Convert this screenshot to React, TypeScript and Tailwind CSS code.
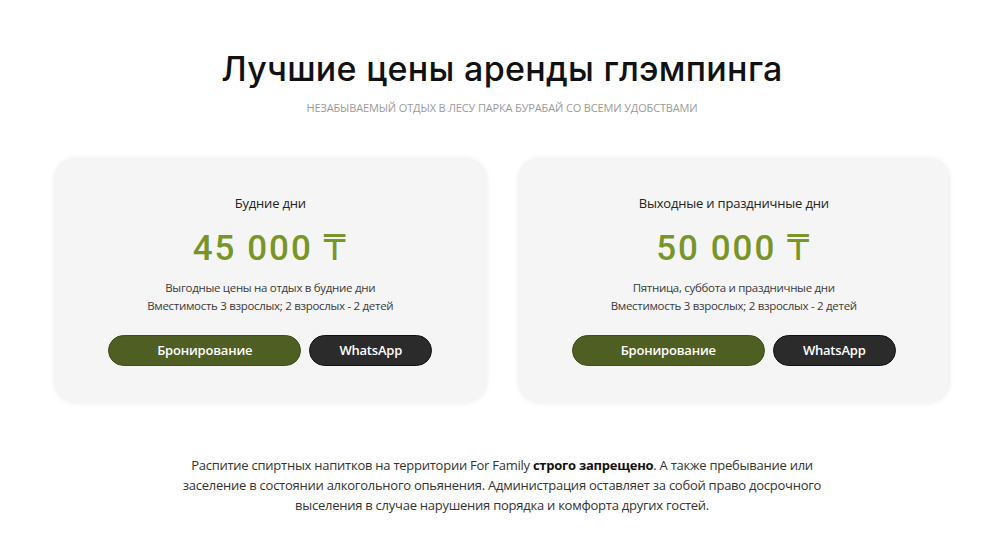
import React from "react";

const body = { fontFamily: '"Open Sans", "Noto Sans", sans-serif' };

function Card({ title, price, line1 }: { title: string; price: string; line1: string }) {
  return (
    <div className="flex-1 rounded-[22px] bg-[#f5f5f5] shadow-[0_0_5px_rgba(0,0,0,0.08)] flex flex-col items-center pt-[36px] pb-[37px]">
      <div className="text-[13px] leading-[18px] text-[#222] tracking-[-0.2px]">{title}</div>
      <div
        className="mt-[17px] text-[35px] leading-[40px] font-medium text-[#789628] tracking-[2px]"
        style={{ fontFamily: 'Roboto, "DejaVu Sans", sans-serif' }}
      >
        {price}
      </div>
      <div className="mt-[10px] text-[11.5px] leading-[18px] text-[#3a3a3a] text-center tracking-[-0.3px]">
        <div>{line1}</div>
        <div>Вместимость 3 взрослых; 2 взрослых - 2 детей</div>
      </div>
      <div className="mt-[20px] flex gap-[8px]">
        <button className="w-[193px] h-[31px] rounded-full bg-[#4f5e22] border border-[#3f4d18] text-white text-[13px] font-semibold tracking-[-0.2px]">
          Бронирование
        </button>
        <button className="w-[123px] h-[31px] rounded-full bg-[#2b2b2b] border border-[#111] text-white text-[13px] font-semibold tracking-[-0.2px]">
          WhatsApp
        </button>
      </div>
    </div>
  );
}

export default function App() {
  return (
    <div className="w-[1000px] h-[552px] bg-white flex flex-col items-center" style={body}>
      <h1
        className="mt-[47px] ml-[4px] text-[34px] leading-[44px] font-medium text-[#111] tracking-[0.3px]"
        style={{ fontFamily: 'Inter, Roboto, sans-serif' }}
      >
        Лучшие цены аренды глэмпинга
      </h1>
      <div className="mt-[9px] ml-[4px] text-[11px] leading-[16px] uppercase text-[#9a9a9a] tracking-[-0.15px]">
        Незабываемый отдых в лесу парка Бурабай со всеми удобствами
      </div>
      <div className="mt-[42px] ml-[4px] w-[896px] flex gap-[31px]">
        <Card title="Будние дни" price="45 000 ₸" line1="Выгодные цены на отдых в будние дни" />
        <Card title="Выходные и праздничные дни" price="50 000 ₸" line1="Пятница, суббота и праздничные дни" />
      </div>
      <p className="mt-[52px] ml-[4px] w-[650px] text-center text-[13px] leading-[20px] text-[#333] tracking-[-0.25px]">
        Распитие спиртных напитков на территории For Family <b className="font-bold text-[#111]">строго запрещено</b>. А также пребывание или заселение в состоянии алкогольного опьянения. Администрация оставляет за собой право досрочного выселения в случае нарушения порядка и комфорта других гостей.
      </p>
    </div>
  );
}
